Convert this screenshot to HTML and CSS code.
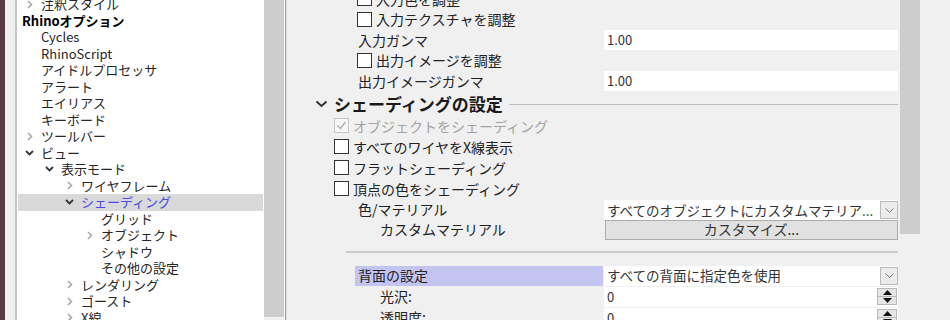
FILE: index.html
```html
<!DOCTYPE html>
<html>
<head>
<meta charset="UTF-8">
<title>Rhinoオプション</title>
<link rel="stylesheet" href="styles.css">
</head>
<body>
<div class="win">
	<div class="edge"></div>
	<div class="frame"></div>

	<!-- 左のツリー -->
	<div class="tree">
		<div class="tree-list">
			<div class="node lv1"><span class="tw"><svg class="cl" width="6" height="9" viewBox="0 0 6 9"><path d="M1 1l3.5 3.5L1 8"/></svg></span>注釈スタイル</div>
			<div class="node lv0 root">Rhinoオプション</div>
			<div class="node lv1"><span class="tw"></span>Cycles</div>
			<div class="node lv1"><span class="tw"></span>RhinoScript</div>
			<div class="node lv1"><span class="tw"></span>アイドルプロセッサ</div>
			<div class="node lv1"><span class="tw"></span>アラート</div>
			<div class="node lv1"><span class="tw"></span>エイリアス</div>
			<div class="node lv1"><span class="tw"></span>キーボード</div>
			<div class="node lv1"><span class="tw"><svg class="cl" width="6" height="9" viewBox="0 0 6 9"><path d="M1 1l3.5 3.5L1 8"/></svg></span>ツールバー</div>
			<div class="node lv1"><span class="tw"><svg class="op" width="9" height="6" viewBox="0 0 9 6"><path d="M1 1l3.5 3.5L8 1"/></svg></span>ビュー</div>
			<div class="node lv2"><span class="tw"><svg class="op" width="9" height="6" viewBox="0 0 9 6"><path d="M1 1l3.5 3.5L8 1"/></svg></span>表示モード</div>
			<div class="node lv3"><span class="tw"><svg class="cl" width="6" height="9" viewBox="0 0 6 9"><path d="M1 1l3.5 3.5L1 8"/></svg></span>ワイヤフレーム</div>
			<div class="node lv3 sel"><span class="tw"><svg class="op" width="9" height="6" viewBox="0 0 9 6"><path d="M1 1l3.5 3.5L8 1"/></svg></span>シェーディング</div>
			<div class="node lv4"><span class="tw"></span>グリッド</div>
			<div class="node lv4"><span class="tw"><svg class="cl" width="6" height="9" viewBox="0 0 6 9"><path d="M1 1l3.5 3.5L1 8"/></svg></span>オブジェクト</div>
			<div class="node lv4"><span class="tw"></span>シャドウ</div>
			<div class="node lv4"><span class="tw"></span>その他の設定</div>
			<div class="node lv3"><span class="tw"><svg class="cl" width="6" height="9" viewBox="0 0 6 9"><path d="M1 1l3.5 3.5L1 8"/></svg></span>レンダリング</div>
			<div class="node lv3"><span class="tw"><svg class="cl" width="6" height="9" viewBox="0 0 6 9"><path d="M1 1l3.5 3.5L1 8"/></svg></span>ゴースト</div>
			<div class="node lv3"><span class="tw"><svg class="cl" width="6" height="9" viewBox="0 0 6 9"><path d="M1 1l3.5 3.5L1 8"/></svg></span>X線</div>
		</div>
	</div>
	<div class="vscroll tree-scroll"><div class="thumb"></div></div>
	<div class="splitter"></div>

	<!-- 右のプロパティ -->
	<div class="panel">
		<div class="panel-body">
			<div class="row chk ind-a"><span class="box"></span>入力色を調整</div>
			<div class="row chk ind-a"><span class="box"></span>入力テクスチャを調整</div>
			<div class="row"><div class="name">入力ガンマ</div><div class="val field">1.00</div></div>
			<div class="row chk ind-a"><span class="box"></span>出力イメージを調整</div>
			<div class="row"><div class="name">出力イメージガンマ</div><div class="val field">1.00</div></div>

			<div class="sect">
				<svg width="13" height="8" viewBox="0 0 13 8"><path d="M1.5 1.5l5 4.5 5-4.5"/></svg>
				<span class="sect-title">シェーディングの設定</span>
				<span class="sect-line"></span>
			</div>

			<div class="row chk ind-b tall off"><span class="box"><svg width="13" height="13" viewBox="0 0 13 13"><path d="M2.5 6.5l3 3 5-6.5"/></svg></span>オブジェクトをシェーディング</div>
			<div class="row chk ind-b tall"><span class="box"></span>すべてのワイヤをX線表示</div>
			<div class="row chk ind-b tall"><span class="box"></span>フラットシェーディング</div>
			<div class="row chk ind-b tall"><span class="box"></span>頂点の色をシェーディング</div>

			<div class="row short">
				<div class="name">色/マテリアル</div>
				<div class="val field drop">
					<span class="dtext">すべてのオブジェクトにカスタムマテリア...</span>
					<span class="dbtn"><svg width="9" height="5" viewBox="0 0 9 5"><path d="M0.5 0.5l4 4 4-4"/></svg></span>
				</div>
			</div>
			<div class="row short">
				<div class="name sub">カスタムマテリアル</div>
				<div class="val"><div class="btn">カスタマイズ...</div></div>
			</div>

			<div class="sep"></div>

			<div class="row tall">
				<div class="name hl-wrap"><span class="hl">背面の設定</span></div>
				<div class="val field drop">
					<span class="dtext">すべての背面に指定色を使用</span>
					<span class="dbtn"><svg width="9" height="5" viewBox="0 0 9 5"><path d="M0.5 0.5l4 4 4-4"/></svg></span>
				</div>
			</div>
			<div class="row tall">
				<div class="name sub">光沢:</div>
				<div class="val field">0<span class="spin"><span><svg width="9" height="5" viewBox="0 0 9 5"><path d="M0 5L4.5 0 9 5z"/></svg></span><span><svg width="9" height="5" viewBox="0 0 9 5"><path d="M0 0L4.5 5 9 0z"/></svg></span></span></div>
			</div>
			<div class="row tall">
				<div class="name sub">透明度:</div>
				<div class="val field">0<span class="spin"><span><svg width="9" height="5" viewBox="0 0 9 5"><path d="M0 5L4.5 0 9 5z"/></svg></span><span><svg width="9" height="5" viewBox="0 0 9 5"><path d="M0 0L4.5 5 9 0z"/></svg></span></span></div>
			</div>
		</div>
	</div>
	<div class="vscroll panel-scroll"><div class="thumb"></div></div>
	<div class="rest"></div>
</div>
</body>
</html>
```

FILE: styles.css
```css
*{
	margin: 0;
	padding: 0;
	box-sizing: border-box;
}
body{
	width: 950px;
	height: 320px;
	overflow: hidden;
	background: #f0f0f0;
	color: #222;
	font-family: "Noto Sans CJK JP", "Noto Sans", sans-serif;
}
.win{
	display: flex;
	height: 320px;
	overflow: hidden;
}
.edge{
	width: 5px;
	background: #5b3b42;
}
.frame{
	width: 12px;
	background: #f0f0f0;
	border-right: 2px solid #c4c4c4;
}

/* ツリー */
.tree{
	width: 247px;
	background: #fff;
	padding: 0 1px;
	overflow: hidden;
	font-size: 13px;
	color: #262626;
}
.tree-list{
	margin-top: -4px;
}
.node{
	height: 16.5px;
	line-height: 16.5px;
	display: flex;
	align-items: center;
	white-space: nowrap;
}
.node.lv0{ padding-left: 4px; }
.node.lv1{ padding-left: 3px; }
.node.lv2{ padding-left: 23px; }
.node.lv3{ padding-left: 43px; }
.node.lv4{ padding-left: 63px; }
.root{
	font-weight: bold;
	color: #000;
}
.sel{
	background: #d9d9d9;
	color: #4848e4;
}
.tw{
	width: 20px;
	height: 16px;
	display: flex;
	align-items: center;
	flex-shrink: 0;
}
.tw svg{
	fill: none;
}
.tw .cl{
	margin-left: 6px;
	stroke: #a9a9a9;
	stroke-width: 1.6;
}
.tw .op{
	margin-left: 4px;
	stroke: #333;
	stroke-width: 1.8;
}

/* スクロールバー */
.vscroll{
	width: 20px;
	background: #f0f0f0;
}
.tree-scroll .thumb{
	height: 317px;
	background: #cdcdcd;
}
.panel-scroll .thumb{
	height: 234px;
	background: #cdcdcd;
}
.splitter{
	width: 3px;
	border-left: 1px solid #fafafa;
	border-right: 1px solid #e4e4e4;
	background: #9d9da8;
}
.rest{
	width: 30px;
	background: #f1f1f1;
}

/* プロパティパネル */
.panel{
	width: 613px;
	background: #f0f0f0;
	overflow: hidden;
	font-size: 14px;
}
.panel-body{
	margin-top: -10.75px;
	padding-right: 2px;
}
.row{
	height: 20.5px;
	padding-bottom: 2px;
	display: flex;
	align-items: center;
	white-space: nowrap;
}
.row.tall{ height: 21px; }
.row.short{ height: 20px; }
.ind-a{ padding-left: 70px; }
.ind-b{ padding-left: 47px; }
.box{
	width: 15px;
	height: 15px;
	border: 1px solid #333;
	background: #fff;
	margin-right: 4px;
	display: flex;
	align-items: center;
	justify-content: center;
	flex-shrink: 0;
}
.off{
	color: #a3a3a3;
}
.off .box{
	border-color: #c6c6c6;
	background: #f7f7f7;
}
.off .box svg{
	fill: none;
	stroke: #b0b0b0;
	stroke-width: 1.4;
}
.name{
	width: 317px;
	flex-shrink: 0;
	padding-left: 71px;
}
.name.sub{
	padding-left: 93px;
}
.hl-wrap{
	padding-left: 68px;
	height: 20px;
	align-self: flex-start;
}
.hl{
	display: block;
	height: 20px;
	line-height: 19px;
	padding-left: 3px;
	margin-right: 1px;
	background: #c4c4f0;
}
.val{
	flex: 1;
	align-self: flex-start;
}
.field{
	height: 20px;
	background: #fff;
	padding-left: 3px;
	padding-bottom: 1px;
	font-size: 13px;
	color: #333;
	display: flex;
	align-items: center;
}
.drop .dtext{
	flex: 1;
	font-size: 13.5px;
	overflow: hidden;
}
.dbtn{
	width: 18px;
	height: 18px;
	margin-top: 1px;
	border: 1px solid #bababa;
	background: #ececec;
	display: flex;
	align-items: center;
	justify-content: center;
}
.dbtn svg{
	fill: none;
	stroke: #7a7a7a;
	stroke-width: 1;
}
.btn{
	height: 20px;
	margin-left: 1px;
	border: 1px solid #adadad;
	background: #e1e1e1;
	text-align: center;
	line-height: 17px;
	font-size: 14px;
	color: #333;
}
.spin{
	width: 20px;
	height: 17px;
	margin-left: auto;
	margin-right: 1px;
	border: 1px solid #b8b8b8;
	background: #e6e6e6;
	display: flex;
	flex-direction: column;
}
.spin span{
	flex: 1;
	display: flex;
	align-items: center;
	justify-content: center;
}
.spin span + span{
	border-top: 1px solid #b8b8b8;
}
.spin svg{
	fill: #111;
}

/* セクション見出し */
.sect{
	height: 24.5px;
	display: flex;
	align-items: center;
	padding-left: 28px;
	padding-bottom: 1px;
}
.sect svg{
	fill: none;
	stroke: #333;
	stroke-width: 2;
	margin-right: 6px;
}
.sect-title{
	font-size: 17px;
	font-weight: bold;
	color: #1a1a1a;
}
.sect-line{
	flex: 1;
	height: 1px;
	margin-left: 6px;
	margin-top: 1px;
	background: #bdbdbd;
}
.sep{
	height: 2px;
	margin: 10.5px 0 13px 59px;
	background: #cbcbcb;
}
```
